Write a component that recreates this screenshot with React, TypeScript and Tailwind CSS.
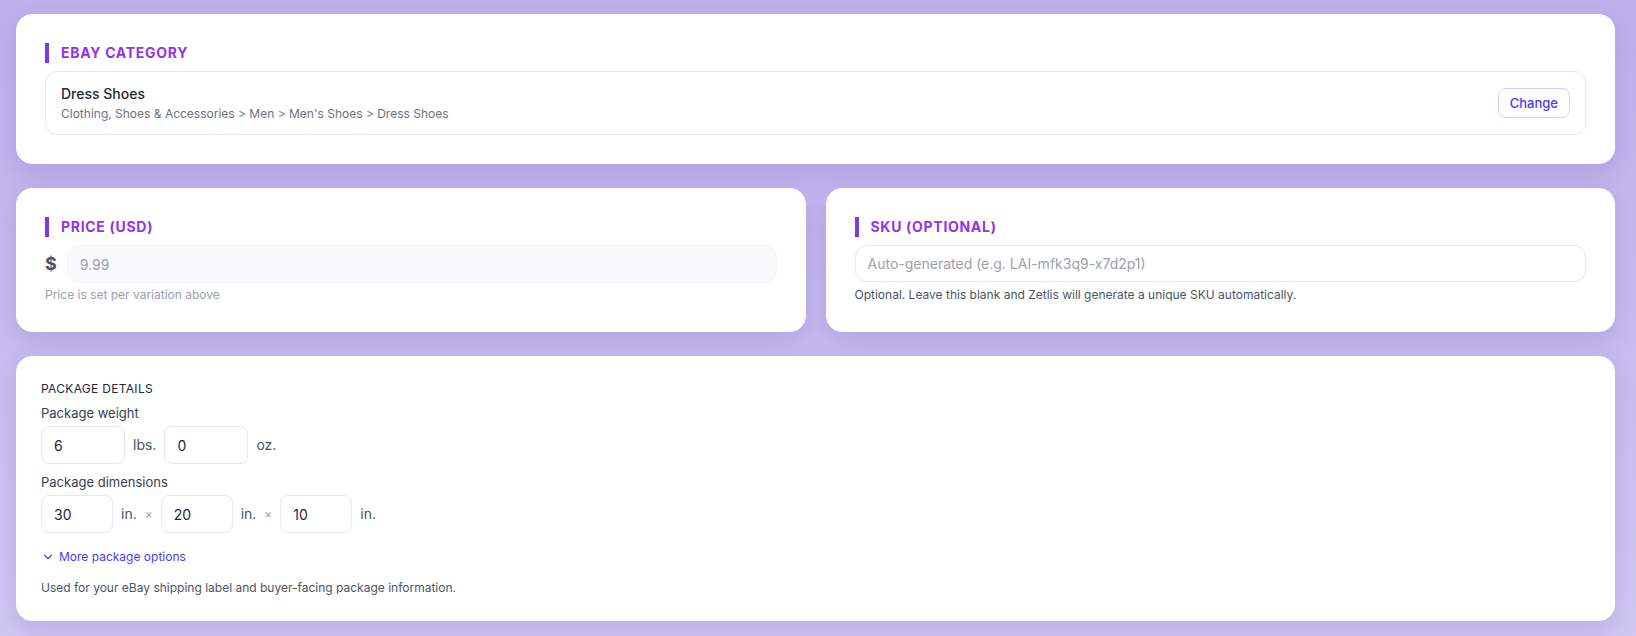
import { ChevronDown } from "lucide-react";

const SectionTitle = ({ children }: { children: string }) => (
  <h3 className="mb-2 border-l-4 border-[#7c3aed] pl-3 text-sm leading-5 font-bold tracking-wider text-[#9333ea]">
    {children}
  </h3>
);

const Card = ({
  children,
  className = "",
}: {
  children: React.ReactNode;
  className?: string;
}) => (
  <div
    className={`rounded-2xl border border-white bg-white shadow-[0_10px_24px_rgba(88,60,170,0.18)] ${className}`}
  >
    {children}
  </div>
);

const NumberBox = ({ value, width }: { value: string; width: string }) => (
  <input
    readOnly
    value={value}
    className={`${width} h-[38px] rounded-lg border border-gray-200 bg-white px-3 text-sm text-gray-800 outline-none`}
  />
);

const Unit = ({ label }: { label: string }) => (
  <span className="text-sm text-gray-600">{label}</span>
);

const Times = () => <span className="text-xs text-gray-400">×</span>;

export default function App() {
  return (
    <div className="min-h-screen bg-linear-to-b from-[#bdb0eb] to-[#d0c8f3] pt-[14px] pr-[21px] pb-4 pl-4 font-['Inter',sans-serif]">
      <div className="flex flex-col gap-6">
        {/* category */}
        <Card className="p-7">
          <SectionTitle>EBAY CATEGORY</SectionTitle>
          <div className="flex items-center justify-between rounded-xl border border-gray-200 px-[15px] py-3">
            <div>
              <p className="text-sm leading-5 font-medium text-gray-800">
                Dress Shoes
              </p>
              <p className="mt-0.5 text-xs leading-4 text-gray-500">
                Clothing, Shoes &amp; Accessories &gt; Men &gt; Men's Shoes
                &gt; Dress Shoes
              </p>
            </div>
            <button className="rounded-lg border border-indigo-200 px-[11px] py-1.5 text-[13px] leading-4 font-medium text-indigo-600">
              Change
            </button>
          </div>
        </Card>

        <div className="grid grid-cols-2 gap-5">
          {/* price */}
          <Card className="p-7">
            <SectionTitle>PRICE (USD)</SectionTitle>
            <div className="flex items-center gap-2.5">
              <span className="text-lg font-bold text-gray-600">$</span>
              <input
                readOnly
                placeholder="9.99"
                className="h-[38px] flex-1 rounded-xl border border-gray-100 bg-gray-50 px-3 text-sm text-gray-900 outline-none placeholder:text-gray-400"
              />
            </div>
            <p className="mt-1 text-xs leading-4 text-gray-400">
              Price is set per variation above
            </p>
          </Card>

          {/* sku */}
          <Card className="p-7">
            <SectionTitle>SKU (OPTIONAL)</SectionTitle>
            <input
              readOnly
              placeholder="Auto-generated (e.g. LAI-mfk3q9-x7d2p1)"
              className="h-[37px] w-full rounded-xl border border-gray-200 bg-white px-3 text-sm text-gray-900 outline-none placeholder:text-gray-400"
            />
            <p className="mt-[5px] text-xs leading-4 text-gray-600">
              Optional. Leave this blank and Zetlis will generate a unique SKU
              automatically.
            </p>
          </Card>
        </div>

        {/* package */}
        <Card className="p-6">
          <p className="text-xs leading-4 tracking-wide text-gray-800">
            PACKAGE DETAILS
          </p>

          <p className="mt-1.5 mb-[3px] text-[13px] leading-5 text-gray-700">
            Package weight
          </p>
          <div className="flex items-center gap-2">
            <NumberBox value="6" width="w-[84px]" />
            <Unit label="lbs." />
            <NumberBox value="0" width="w-[84px]" />
            <Unit label="oz." />
          </div>

          <p className="mt-2 mb-[3px] text-[13px] leading-5 text-gray-700">
            Package dimensions
          </p>
          <div className="flex items-center gap-2">
            <NumberBox value="30" width="w-[72px]" />
            <Unit label="in." />
            <Times />
            <NumberBox value="20" width="w-[72px]" />
            <Unit label="in." />
            <Times />
            <NumberBox value="10" width="w-[72px]" />
            <Unit label="in." />
          </div>

          <button className="mt-4 flex items-center gap-1 text-xs leading-4 text-indigo-600">
            <ChevronDown size={14} strokeWidth={2} />
            More package options
          </button>

          <p className="mt-[15px] text-xs leading-4 text-gray-600">
            Used for your eBay shipping label and buyer-facing package
            information.
          </p>
        </Card>
      </div>
    </div>
  );
}
